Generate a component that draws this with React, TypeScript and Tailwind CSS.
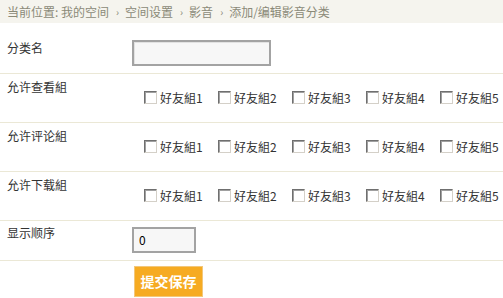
const groups = ['好友組1', '好友組2', '好友組3', '好友組4', '好友組5']

const crumbs = ['空间设置', '影音', '添加/编辑影音分类']

function Box() {
  return (
    <span className="inline-block w-[13px] h-[13px] bg-white border border-t-[#6f6f6f] border-l-[#6f6f6f] border-b-[#d4d0c8] border-r-[#d4d0c8] shadow-[inset_1px_1px_0_#a0a0a0]" />
  )
}

function GroupRow({ label }: { label: string }) {
  return (
    <div className="flex h-[49px] border-b border-[#ebe8d6]">
      <div className="w-[132px] shrink-0 pl-[7px] pt-[5px] leading-4">{label}</div>
      <div className="flex shrink-0 pt-[16px] pl-[12px]">
        {groups.map((g) => (
          <label key={g} className="flex w-[74px] shrink-0 items-start gap-[3px] leading-4">
            <span className="pt-[1px] flex">
              <Box />
            </span>
            <span>{g}</span>
          </label>
        ))}
      </div>
    </div>
  )
}

export default function App() {
  return (
    <div className="w-[503px] h-[298px] bg-white text-[12px] text-[#333] overflow-hidden font-['Noto_Sans_CJK_SC',sans-serif]">
      <div className="h-[23px] bg-[#f5f4ee] pl-[7px] flex items-center text-[#8b8a78] leading-4">
        <span>当前位置: 我的空间</span>
        {crumbs.map((c) => (
          <span key={c} className="flex items-center">
            <span className="ml-[7px] mr-[6px] text-[10px]">›</span>
            <span>{c}</span>
          </span>
        ))}
      </div>

      <div className="flex h-[51px] border-b border-[#ebe8d6]">
        <div className="w-[132px] shrink-0 pl-[7px] pt-[17px] leading-4">分类名</div>
        <div className="pt-[17px]">
          <div className="w-[139px] h-[26px] border-2 border-[#a3a3a3] bg-[#f7f7f7] shadow-[inset_1px_1px_0_#e2e2e2]" />
        </div>
      </div>

      <GroupRow label="允许查看組" />
      <GroupRow label="允许评论組" />
      <GroupRow label="允许下载組" />

      <div className="flex h-[40px] border-b border-[#ebe8d6]">
        <div className="w-[132px] shrink-0 pl-[7px] pt-[4px] leading-4">显示顺序</div>
        <div className="pt-[6px]">
          <div className="w-[64px] h-[26px] border-2 border-[#a3a3a3] bg-[#f7f7f7] flex items-center pl-[5px] text-black">0</div>
        </div>
      </div>

      <div className="pl-[134px] pt-[5px]">
        <button className="w-[69px] h-[31px] bg-[#f6ab22] border border-[#f3c77a] text-white font-bold text-[14px] flex items-center justify-center">
          提交保存
        </button>
      </div>
    </div>
  )
}
